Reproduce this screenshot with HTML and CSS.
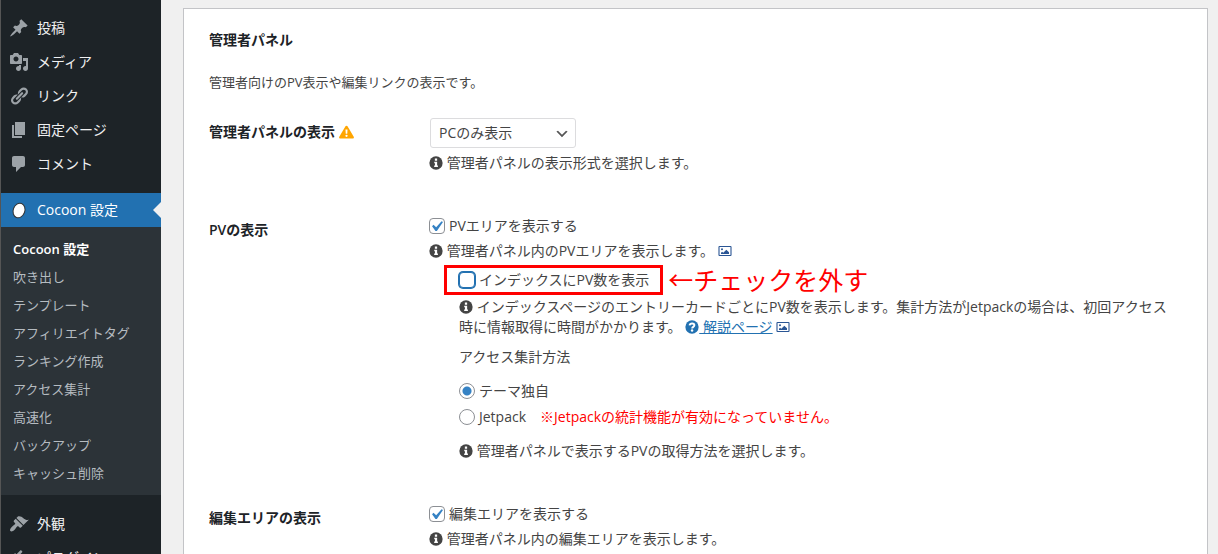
FILE: index.html
```html
<!DOCTYPE html>
<html lang="ja">
<head>
<meta charset="UTF-8">
<meta name="viewport" content="width=device-width, initial-scale=1.0">
<title>Cocoon 設定</title>
<link rel="stylesheet" href="styles.css">
</head>
<body>
    <!-- shared icons -->
    <svg class="sprite" aria-hidden="true">
        <symbol id="icon-info" viewBox="0 0 16 16">
            <circle cx="8" cy="8" r="7.6" fill="currentColor"/>
            <path fill="#fff" d="M6.7 2.9h2.6v2.4H6.7zM6 6.5h3.3v4.4h.9v1.7H5.9v-1.7h.9V8.2H6z"/>
        </symbol>
        <symbol id="icon-image" viewBox="0 0 14 14">
            <rect x="1" y="2.5" width="12" height="9" rx="0.5" fill="none" stroke="currentColor" stroke-width="1.1"/>
            <circle cx="4" cy="5.3" r="1" fill="currentColor"/>
            <path fill="currentColor" d="M3 10V8.8l1.1-1.1 1.2 1 3-3L11 8.3V10z"/>
        </symbol>
        <symbol id="icon-help" viewBox="0 0 16 16">
            <circle cx="8" cy="8" r="7.6" fill="currentColor"/>
            <path fill="none" stroke="#fff" stroke-width="2.2" d="M5.2 6.1C5.5 4.7 6.7 4 8.1 4c1.6 0 2.6.9 2.6 2.1 0 1.8-2.5 1.7-2.5 3.5"/>
            <circle cx="8.1" cy="12" r="1.4" fill="#fff"/>
        </symbol>
    </svg>

    <div class="wrapper">
        <nav class="sidebar">
            <ul class="menu">
                <li><a href="#">
                    <svg class="menu-icon" viewBox="0 0 20 20"><path d="M10.44 3.02l1.82-1.82 6.36 6.35-1.83 1.82c-1.05-.68-2.48-.57-3.41.36l-.75.75c-.92.93-1.04 2.35-.35 3.41l-1.83 1.82-2.41-2.41-2.8 2.79c-.42.42-3.38 2.71-3.8 2.29s1.86-3.39 2.28-3.81l2.79-2.79L4.1 9.36l1.83-1.82c1.05.69 2.48.57 3.4-.36l.75-.75c.93-.92 1.05-2.35.36-3.41z"/></svg>
                    投稿</a></li>
                <li><a href="#">
                    <svg class="menu-icon" viewBox="0 0 20 20"><path d="M13 11V4c0-.55-.45-1-1-1h-1.67L9 1H5L3.67 3H2c-.55 0-1 .45-1 1v7c0 .55.45 1 1 1h10c.55 0 1-.45 1-1zM7 4.5c1.38 0 2.5 1.12 2.5 2.5S8.38 9.5 7 9.5 4.5 8.38 4.5 7 5.62 4.5 7 4.5zM14 6h5v10.5c0 1.38-1.12 2.5-2.5 2.5S14 17.88 14 16.5s1.12-2.5 2.5-2.5c.17 0 .34.02.5.05V9h-3V6zm-4 8.05V13h2v3.5c0 1.38-1.12 2.5-2.5 2.5S7 17.88 7 16.5 8.12 14 9.5 14c.17 0 .34.02.5.05z"/></svg>
                    メディア</a></li>
                <li><a href="#">
                    <svg class="menu-icon" viewBox="0 0 20 20"><path d="M17.74 2.76c1.68 1.69 1.68 4.41 0 6.1l-1.53 1.52c-1.12 1.12-2.7 1.47-4.14 1.09l2.62-2.61.76-.77.76-.76c.84-.84.84-2.2 0-3.04-.84-.85-2.2-.85-3.04 0l-.77.76-3.38 3.38c-.37-1.44-.02-3.02 1.1-4.14l1.52-1.53c1.69-1.68 4.42-1.68 6.1 0zM8.59 13.43l5.34-5.34c.42-.42.42-1.1 0-1.52-.44-.43-1.13-.39-1.53 0l-5.33 5.34c-.42.42-.42 1.1 0 1.52.44.43 1.13.39 1.52 0zm-.76 2.29l4.14-4.15c.38 1.44.03 3.02-1.09 4.14l-1.52 1.53c-1.69 1.68-4.41 1.68-6.1 0-1.68-1.68-1.68-4.42 0-6.1l1.53-1.52c1.12-1.12 2.7-1.47 4.14-1.1l-4.14 4.15c-.85.84-.85 2.2 0 3.05.84.84 2.2.84 3.04 0z"/></svg>
                    リンク</a></li>
                <li><a href="#">
                    <svg class="menu-icon" viewBox="0 0 20 20"><path d="M6 15V2h10v13H6zm-1 1h8v2H3V5h2v11z"/></svg>
                    固定ページ</a></li>
                <li><a href="#">
                    <svg class="menu-icon" viewBox="0 0 20 20"><path d="M5 2h9c1.1 0 2 .9 2 2v7c0 1.1-.9 2-2 2h-2l-5 5v-5H5c-1.1 0-2-.9-2-2V4c0-1.1.9-2 2-2z"/></svg>
                    コメント</a></li>
                <li class="separator"></li>
                <li class="current"><a href="#">
                    <svg class="menu-icon" viewBox="0 0 20 20"><ellipse cx="10" cy="10.5" rx="5.8" ry="7.4" transform="rotate(20 10 10.5)" fill="#fff" stroke="#333" stroke-width="1"/></svg>
                    Cocoon 設定</a>
                    <ul class="submenu">
                        <li class="active"><a href="#">Cocoon 設定</a></li>
                        <li><a href="#">吹き出し</a></li>
                        <li><a href="#">テンプレート</a></li>
                        <li><a href="#">アフィリエイトタグ</a></li>
                        <li><a href="#">ランキング作成</a></li>
                        <li><a href="#">アクセス集計</a></li>
                        <li><a href="#">高速化</a></li>
                        <li><a href="#">バックアップ</a></li>
                        <li><a href="#">キャッシュ削除</a></li>
                    </ul>
                </li>
                <li class="separator"></li>
                <li><a href="#">
                    <svg class="menu-icon" viewBox="0 0 20 20"><path d="M14.48 11.06L7.41 3.99l1.5-1.5c.5-.56 2.3-.47 3.51.32 1.21.8 1.43 1.28 2.91 2.1 1.18.64 2.45 1.26 4.45.85zm-.71.71L6.7 4.7 4.93 6.47c-.39.39-.39 1.02 0 1.41l1.06 1.06c.39.39.39 1.03 0 1.42-.6.6-1.43 1.11-2.21 1.69-.35.26-.7.53-1.01.84C1.43 14.23.4 16.08 1.4 17.07c.99 1 2.84-.03 4.18-1.36.31-.31.58-.66.85-1.02.57-.78 1.08-1.61 1.69-2.21.39-.39 1.02-.39 1.41 0l1.06 1.06c.39.39 1.02.39 1.41 0z"/></svg>
                    外観</a></li>
                <li><a href="#">
                    <svg class="menu-icon" viewBox="0 0 20 20"><path d="M13.11 4.36L9.87 7.6 8 5.73l3.24-3.24c.35-.34 1.05-.2 1.56.32.52.51.66 1.21.31 1.55zm-8 1.77l.91-1.12 9.01 9.01-1.19.84c-.71.71-2.63 1.16-3.82 1.16H6.14L4.9 17.26c-.59.59-1.54.59-2.12 0-.59-.58-.59-1.53 0-2.12l1.24-1.24v-3.88c0-1.13.4-3.19 1.09-3.89zm7.26 3.97l3.24-3.24c.34-.35 1.04-.21 1.55.31.52.51.66 1.21.31 1.55l-3.24 3.25z"/></svg>
                    プラグイン</a></li>
            </ul>
        </nav>

        <main class="content">
            <form class="panel">
                <h2>管理者パネル</h2>
                <p class="lead">管理者向けのPV表示や編集リンクの表示です。</p>

                <div class="row">
                    <div class="row-title">
                        <label for="panelType">管理者パネルの表示</label>
                        <svg class="warning" viewBox="0 0 16 14"><path fill="#ffa500" d="M8 .3c.5 0 .9.2 1.1.6l6.6 11.2c.5.9-.1 1.8-1.1 1.8H1.4c-1 0-1.6-.9-1.1-1.8L6.9.9C7.1.5 7.5.3 8 .3z"/><path fill="#fff" d="M6.9 4.4h2.2l-.3 4.5H7.2z"/><circle cx="8" cy="11" r="1.2" fill="#fff"/></svg>
                    </div>
                    <div class="row-body">
                        <select id="panelType">
                            <option>PCのみ表示</option>
                        </select>
                        <p class="tips"><svg class="icon"><use href="#icon-info"/></svg> 管理者パネルの表示形式を選択します。</p>
                    </div>
                </div>

                <div class="row">
                    <div class="row-title">PVの表示</div>
                    <div class="row-body">
                        <label class="option"><input type="checkbox" checked>PVエリアを表示する</label>
                        <p class="tips"><svg class="icon"><use href="#icon-info"/></svg> 管理者パネル内のPVエリアを表示します。 <svg class="icon image"><use href="#icon-image"/></svg></p>
                        <div class="marked">
                            <label class="option"><input class="focused" type="checkbox">インデックスにPV数を表示</label>
                            <span class="note">←チェックを外す</span>
                        </div>
                        <div class="indent">
                            <p class="text"><svg class="icon"><use href="#icon-info"/></svg> インデックスページのエントリーカードごとにPV数を表示します。集計方法がJetpackの場合は、初回アクセス時に情報取得に時間がかかります。 <svg class="icon help"><use href="#icon-help"/></svg><a class="link" href="#">&nbsp;解説ページ</a> <svg class="icon image"><use href="#icon-image"/></svg></p>
                            <p class="subtitle" id="countMethod">アクセス集計方法</p>
                            <div class="radios" role="radiogroup" aria-labelledby="countMethod">
                                <label class="option"><input type="radio" name="method" checked>テーマ独自</label>
                                <label class="option"><input type="radio" name="method">Jetpack<span class="alert">※Jetpackの統計機能が有効になっていません。</span></label>
                            </div>
                            <p class="text"><svg class="icon"><use href="#icon-info"/></svg> 管理者パネルで表示するPVの取得方法を選択します。</p>
                        </div>
                    </div>
                </div>

                <div class="row">
                    <div class="row-title">編集エリアの表示</div>
                    <div class="row-body">
                        <label class="option"><input type="checkbox" checked>編集エリアを表示する</label>
                        <p class="tips"><svg class="icon"><use href="#icon-info"/></svg> 管理者パネル内の編集エリアを表示します。</p>
                    </div>
                </div>
            </form>
        </main>
    </div>
</body>
</html>
```

FILE: styles.css
```css
* {
    box-sizing: border-box;
}

body {
    margin: 0;
    height: 100vh;
    overflow: hidden;
    background-color: #f0f0f0;
    color: #444;
    font-family: "Open Sans", "Noto Sans CJK JP", sans-serif;
    font-size: 14px;
    line-height: 20px;
}

h2, p, ul {
    margin: 0;
    padding: 0;
}

ul {
    list-style: none;
}

.sprite {
    display: none;
}

.wrapper {
    display: flex;
    min-height: 100vh;
}

/* left menu */
.sidebar {
    flex: none;
    width: 161px;
    padding-top: 11px;
    border-left: 1px solid #555;
    background-color: #1d2327;
}

.menu a {
    display: flex;
    align-items: center;
    gap: 8px;
    height: 34px;
    padding-left: 8px;
    color: #f0f0f1;
    text-decoration: none;
}

.menu-icon {
    width: 20px;
    height: 20px;
    fill: #9ca2a7;
}

.menu .separator {
    height: 12px;
}

.menu .current > a {
    position: relative;
    background-color: #2271b1;
    color: #fff;
}

.menu .current > a::after {
    content: "";
    position: absolute;
    top: 9px;
    right: 0;
    border: 8px solid transparent;
    border-left: none;
    border-right-color: #f0f0f0;
}

.submenu {
    padding: 8px 0;
    background-color: #2c3338;
}

.menu .submenu a {
    height: 28px;
    padding-left: 12px;
    color: #b5bbc0;
    font-size: 13px;
}

.menu .submenu .active a {
    color: #fff;
    font-weight: 600;
}

/* settings panel */
.content {
    flex: 1;
    padding: 8px 10px 0 22px;
}

.panel {
    min-height: 100%;
    padding: 21px 25px;
    border: 1px solid #c3c4c7;
    background-color: #fff;
}

h2 {
    color: #1d2327;
    font-size: 14px;
    font-weight: 600;
}

.lead {
    margin: 22px 0 26px;
    font-size: 13px;
}

.row {
    display: flex;
    margin-bottom: 43px;
}

.row-title {
    display: flex;
    flex: none;
    align-items: center;
    align-self: flex-start;
    gap: 4px;
    width: 220px;
    padding-top: 4px;
    color: #1d2327;
    font-weight: 600;
}

.warning {
    width: 15px;
    height: 14px;
}

.row-body {
    flex: 1;
    padding-right: 8px;
}

select {
    display: block;
    width: 146px;
    height: 30px;
    margin: 0 1px;
    padding: 0 24px 0 8px;
    border: 1px solid #dcdcde;
    border-radius: 3px;
    background: #fff url("data:image/svg+xml,%3Csvg xmlns='http://www.w3.org/2000/svg' viewBox='0 0 20 20'%3E%3Cpath d='M5 6l5 5 5-5 2 1-7 7-7-7 2-1z' fill='%23555'/%3E%3C/svg%3E") no-repeat right 5px top 55%;
    background-size: 16px 16px;
    color: #444;
    font: inherit;
    appearance: none;
}

.tips {
    margin-top: 5px;
}

.icon {
    width: 14px;
    height: 14px;
    vertical-align: -2px;
}

.icon.image {
    color: #2a5594;
}

.icon.help {
    color: #2271b1;
}

.link {
    color: #2271b1;
}

.option {
    display: flex;
    align-items: center;
    gap: 4px;
}

input {
    width: 16px;
    height: 16px;
    margin: 0;
    border: 1px solid #8c8f94;
    border-radius: 4px;
    background-color: #fff;
    appearance: none;
}

input[type="checkbox"]:checked {
    background: #fff url("data:image/svg+xml,%3Csvg xmlns='http://www.w3.org/2000/svg' viewBox='0 0 20 20'%3E%3Cpath d='M14.83 4.89l1.34.94-5.81 8.38H9.02L5.78 9.67l1.34-1.25 2.57 2.4z' fill='%233582c4'/%3E%3C/svg%3E") no-repeat -4px -3px;
    background-size: 21px 21px;
}

input[type="radio"] {
    border-radius: 50%;
}

input[type="radio"]:checked {
    background: radial-gradient(circle, #3582c4 4px, #fff 5px);
}

input.focused {
    border-color: #2271b1;
    box-shadow: 0 0 0 1px #2271b1;
}

/* red frame with a memo beside it */
.marked {
    position: relative;
    width: fit-content;
    margin: 4px 0 2px 15px;
    padding: 2px 11px 2px 12px;
    border: 3px solid #f00;
}

.note {
    position: absolute;
    top: -3px;
    left: 100%;
    margin-left: 8px;
    color: #f00;
    font-size: 25px;
    line-height: 30px;
    white-space: nowrap;
}

.indent {
    padding-left: 30px;
}

.subtitle {
    margin: 10px 0 14px;
}

.radios {
    display: flex;
    flex-direction: column;
    gap: 6px;
    margin-bottom: 14px;
}

.alert {
    margin-left: 10px;
    color: #f00;
}
```
